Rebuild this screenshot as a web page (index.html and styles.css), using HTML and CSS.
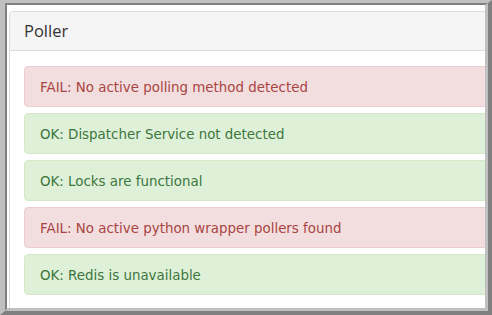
FILE: index.html
```html
<!DOCTYPE html>
<html>
<head>
<meta charset="utf-8">
<link rel="stylesheet" href="styles.css">
</head>
<body>
<div class="frame">
  <div class="frame-inner">
    <div class="panel">
      <div class="panel-heading">Poller</div>
      <div class="panel-body">
        <div class="alert alert-danger">FAIL: No active polling method detected</div>
        <div class="alert alert-success">OK: Dispatcher Service not detected</div>
        <div class="alert alert-success">OK: Locks are functional</div>
        <div class="alert alert-danger">FAIL: No active python wrapper pollers found</div>
        <div class="alert alert-success">OK: Redis is unavailable</div>
      </div>
    </div>
  </div>
</div>
</body>
</html>
```
FILE: styles.css
```css
html, body {
  margin: 0;
  padding: 0;
  background: #ffffff;
}
body {
  font-family: "Open Sans", "DejaVu Sans", sans-serif;
  color: #333333;
}
.frame {
  width: 492px;
  height: 315px;
  box-sizing: border-box;
  border-style: solid;
  border-width: 3px 4px 4px 5px;
  border-color: #c0c0c0 #808080 #808080 #c0c0c0;
}
.frame-inner {
  height: 100%;
  box-sizing: border-box;
  border-style: solid;
  border-width: 2px 3px 3px 2px;
  border-color: #808080 #c0c0c0 #c0c0c0 #808080;
  background: #ffffff;
  overflow: hidden;
  padding: 6px 0 0 2px;
}
.panel {
  width: 540px;
  border: 1px solid #dddddd;
  border-radius: 4px;
  background: #ffffff;
}
.panel-heading {
  background: #f5f5f5;
  border-bottom: 1px solid #dddddd;
  border-radius: 3px 3px 0 0;
  padding: 10px 14px;
  font-size: 16.5px;
  line-height: 18px;
  color: #333333;
}
.panel-body {
  padding: 15px 14px 20px;
  display: flex;
  flex-direction: column;
  gap: 6px;
}
.alert {
  border: 1px solid transparent;
  border-radius: 4px;
  padding: 11px 15px 9px;
  font-family: "DejaVu Sans", Verdana, sans-serif;
  font-size: 13.4px;
  line-height: 19px;
}
.alert-danger {
  background: #f2dede;
  border-color: #ebccd1;
  color: #a94442;
}
.alert-success {
  background: #dff0d8;
  border-color: #d6e9c6;
  color: #3c763d;
}
```
